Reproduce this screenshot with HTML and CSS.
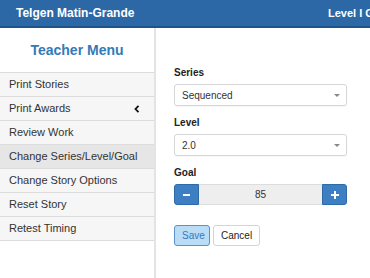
FILE: index.html
```html
<!DOCTYPE html>
<html lang="en">
<head>
    <meta charset="UTF-8">
    <meta name="viewport" content="width=device-width, initial-scale=1.0">
    <link rel="stylesheet" href="styles.css">
    <title>Teacher Menu</title>
</head>
<body>
    <div class="topbar">
        <span class="student">Telgen Matin-Grande</span>
        <span class="status">Level I Goal 85</span>
    </div>

    <div class="page">
        <div class="sidebar">
            <div class="menu-title">Teacher Menu</div>
            <div class="menu">
                <div class="menu-item">Print Stories</div>
                <div class="menu-item">Print Awards
                    <svg class="chev" width="6" height="8" viewBox="0 0 6 8"><polyline points="4.5,0.8 1.5,4 4.5,7.2" fill="none" stroke="#111" stroke-width="1.8"/></svg>
                </div>
                <div class="menu-item">Review Work</div>
                <div class="menu-item active">Change Series/Level/Goal</div>
                <div class="menu-item">Change Story Options</div>
                <div class="menu-item">Reset Story</div>
                <div class="menu-item">Retest Timing</div>
            </div>
        </div>

        <div class="main">
            <div class="field">
                <div class="label">Series</div>
                <div class="select">Sequenced<span class="caret"></span></div>
            </div>
            <div class="field">
                <div class="label">Level</div>
                <div class="select">2.0<span class="caret"></span></div>
            </div>
            <div class="field">
                <div class="label">Goal</div>
                <div class="spinner">
                    <div class="spin-btn left"><span class="minus"></span></div>
                    <div class="spin-val">85</div>
                    <div class="spin-btn right"><span class="plus"></span></div>
                </div>
            </div>
            <div class="actions">
                <div class="btn save">Save</div>
                <div class="btn cancel">Cancel</div>
            </div>
        </div>
    </div>
</body>
</html>
```
FILE: styles.css
```css
body{margin:0;font-family:"Liberation Sans",Arial,sans-serif;color:#333;overflow:hidden;background:#fff;}

.topbar{height:26px;background:#2b68a5;border-bottom:2px solid #1e528a;display:flex;align-items:center;color:#fff;font-weight:bold;font-size:12px;}
.student{margin-left:16px;}
.status{margin-left:auto;width:42px;white-space:nowrap;overflow:hidden;font-size:11px;}

.page{display:flex;height:calc(100vh - 28px);}
.sidebar{width:154px;border-right:2px solid #e4e4e4;flex-shrink:0;}
.menu-title{height:44px;line-height:44px;text-align:center;color:#337ab7;font-weight:bold;font-size:14px;}
.menu{border-top:1px solid #dcdcdc;}
.menu-item{height:23px;line-height:23px;padding-left:9px;font-size:11px;background:#f6f6f6;border-bottom:1px solid #dcdcdc;display:flex;align-items:center;}
.menu-item.active{background:#e6e6e6;}
.chev{margin-left:auto;margin-right:14px;}

.main{padding:38px 0 0 18px;width:173px;}
.field{margin-bottom:10px;}
.label{font-size:10px;font-weight:bold;line-height:14px;margin-bottom:4px;color:#222;}
.select{height:20px;border:1px solid #d6d6d6;border-radius:3px;display:flex;align-items:center;padding-left:7px;font-size:10px;box-shadow:0 1px 1px rgba(0,0,0,0.04);}
.caret{margin-left:auto;margin-right:6px;width:0;height:0;border-left:3px solid transparent;border-right:3px solid transparent;border-top:3px solid #888;}

.spinner{display:flex;height:21px;}
.spin-btn{width:23px;background:#3d7fc2;border:1px solid #2e6aa6;display:flex;align-items:center;justify-content:center;}
.spin-btn.left{border-radius:3px 0 0 3px;}
.spin-btn.right{border-radius:0 3px 3px 0;}
.spin-val{flex:1;background:#eee;border-top:1px solid #ddd;border-bottom:1px solid #ddd;font-size:10px;display:flex;align-items:center;justify-content:center;}
.minus{width:7px;height:2px;background:#fff;}
.plus{width:8px;height:8px;background:linear-gradient(#fff,#fff) center/8px 2px no-repeat,linear-gradient(#fff,#fff) center/2px 8px no-repeat;}

.actions{display:flex;gap:3px;margin-top:20px;}
.btn{height:19px;line-height:19px;font-size:10px;border-radius:3px;padding:0 7px;}
.save{background:#b9dcf7;border:1px solid #5a93c8;color:#3a78b8;width:20px;}
.cancel{background:#fff;border:1px solid #d4d4d4;color:#222;}
```
